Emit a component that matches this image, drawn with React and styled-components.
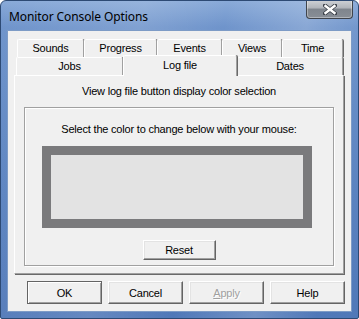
import styled, { createGlobalStyle } from 'styled-components'

const GlobalStyle = createGlobalStyle`
  html, body {
    margin: 0;
    padding: 0;
    background: #ffffff;
  }
  body {
    font-family: "Liberation Sans", Arial, sans-serif;
  }
`

const Window = styled.div`
  width: 359px;
  height: 319px;
  box-sizing: border-box;
  display: flex;
  flex-direction: column;
  border: 1px solid #2d4a74;
  border-radius: 6px 6px 2px 2px;
  background:
    linear-gradient(100deg, rgba(255,255,255,0) 0%, rgba(255,255,255,0.12) 35%, rgba(255,255,255,0) 55%, rgba(255,255,255,0.18) 75%, rgba(255,255,255,0) 90%),
    linear-gradient(180deg, #89aad8 0px, #6f94cb 26px, #5b83c0 60%, #5078b8 100%);
  overflow: hidden;
`

const TitleBar = styled.div`
  height: 29px;
  display: flex;
  align-items: flex-start;
  flex-shrink: 0;
`

const Title = styled.div`
  padding: 7px 0 0 8px;
  font-family: "Noto Sans", "Open Sans", sans-serif;
  font-size: 12px;
  color: #000;
  letter-spacing: -0.1px;
`

const CloseButton = styled.div`
  margin-left: auto;
  margin-right: 5px;
  margin-top: -1px;
  width: 47px;
  height: 19px;
  box-sizing: border-box;
  border: 1px solid #3f444c;
  border-top: none;
  border-radius: 0 0 4px 4px;
  background: linear-gradient(180deg, #d0d3d7 0%, #b0b4ba 45%, #7f858d 50%, #888e96 100%);
  box-shadow: inset 0 0 0 1px rgba(255,255,255,0.35);
  display: flex;
  align-items: center;
  justify-content: center;
`

const Client = styled.div`
  flex: 1;
  margin: 0 6px 6px 6px;
  background: #f0f0f0;
  border: 1px solid #7d9bc6;
  padding: 8px 6px 0 6px;
  display: flex;
  flex-direction: column;
  font-size: 11px;
  letter-spacing: -0.2px;
  color: #000;
`

const TabRow = styled.div`
  display: flex;
  height: 18px;
  padding-left: ${p => p.$indent}px;
`

const Tab = styled.div`
  width: ${p => p.$w}px;
  box-sizing: border-box;
  height: ${p => (p.$selected ? 21 : 18)}px;
  margin-top: ${p => (p.$selected ? -2 : 0)}px;
  border-top: 1px solid #ffffff;
  border-left: 1px solid #ffffff;
  border-right: 1px solid #a0a0a0;
  box-shadow: 1px 0 0 #696969;
  border-radius: 2px 2px 0 0;
  background: #f0f0f0;
  display: flex;
  align-items: flex-start;
  justify-content: center;
  padding-top: ${p => (p.$selected ? 3 : 2)}px;
  position: relative;
  z-index: ${p => (p.$selected ? 2 : 1)};
`

const Panel = styled.div`
  width: 330px;
  height: 199px;
  box-sizing: border-box;
  border-top: 1px solid #ffffff;
  border-left: 1px solid #ffffff;
  border-right: 1px solid #a0a0a0;
  border-bottom: 1px solid #a0a0a0;
  box-shadow: 1px 1px 0 #696969;
  display: flex;
  flex-direction: column;
  align-items: center;
  padding-top: 8px;
`

const Caption = styled.div`
  line-height: 14px;
  text-align: center;
`

const GroupBox = styled.div`
  margin-top: 9px;
  width: 310px;
  height: 159px;
  box-sizing: border-box;
  border: 1px solid #a0a0a0;
  box-shadow: inset 1px 1px 0 #ffffff, 1px 1px 0 #ffffff;
  display: flex;
  flex-direction: column;
  align-items: center;
  padding-top: 14px;
`

const Swatch = styled.div`
  margin-top: 10px;
  margin-right: 4px;
  width: 270px;
  height: 82px;
  box-sizing: border-box;
  border: 9px solid #7a7a7c;
  background: #e3e3e3;
`

const Button = styled.div`
  width: ${p => p.$w || 75}px;
  height: ${p => p.$h || 23}px;
  box-sizing: border-box;
  background: #f0f0f0;
  border-top: 1px solid ${p => (p.$default ? '#646464' : '#ffffff')};
  border-left: 1px solid ${p => (p.$default ? '#646464' : '#ffffff')};
  border-right: 1px solid #646464;
  border-bottom: 1px solid #646464;
  box-shadow: ${p =>
    p.$default
      ? 'inset 1px 1px 0 #ffffff, inset -1px -1px 0 #a0a0a0'
      : 'inset -1px -1px 0 #a0a0a0, inset 1px 1px 0 #e3e3e3'};
  display: flex;
  align-items: center;
  justify-content: center;
  color: ${p => (p.$disabled ? '#a0a0a0' : '#000')};
  text-shadow: ${p => (p.$disabled ? '1px 1px 0 #ffffff' : 'none')};
  font-size: 11px;
`

const ResetButton = styled(Button)`
  margin-top: 12px;
`

const Accel = styled.span`
  text-decoration: underline;
`

const ButtonRow = styled.div`
  display: flex;
  gap: 6px;
  margin-top: 7px;
  padding-left: 13px;
`

const row1 = [
  ['Sounds', 67],
  ['Progress', 73],
  ['Events', 65],
  ['Views', 60],
  ['Time', 61]
]

const row2 = [
  ['Jobs', 107],
  ['Log file', 114, true],
  ['Dates', 106]
]

export default function App() {
  return (
    <>
      <GlobalStyle />
      <Window>
        <TitleBar>
          <Title>Monitor Console Options</Title>
          <CloseButton>
            <svg width="14" height="11" viewBox="0 0 14 11">
              <path d="M2 1.5 L12 9.5 M12 1.5 L2 9.5" stroke="#3a3f47" strokeWidth="4" strokeLinecap="square" />
              <path d="M2.5 2 L11.5 9 M11.5 2 L2.5 9" stroke="#ffffff" strokeWidth="2.4" strokeLinecap="square" />
            </svg>
          </CloseButton>
        </TitleBar>
        <Client>
          <TabRow $indent={3}>
            {row1.map(([label, w]) => (
              <Tab key={label} $w={w}>{label}</Tab>
            ))}
          </TabRow>
          <TabRow $indent={2}>
            {row2.map(([label, w, sel]) => (
              <Tab key={label} $w={w} $selected={sel}>{label}</Tab>
            ))}
          </TabRow>
          <Panel>
            <Caption>View log file button display color selection</Caption>
            <GroupBox>
              <Caption>Select the color to change below with your mouse:</Caption>
              <Swatch />
              <ResetButton $w={73} $h={20}>Reset</ResetButton>
            </GroupBox>
          </Panel>
          <ButtonRow>
            <Button $default>OK</Button>
            <Button>Cancel</Button>
            <Button $disabled><span><Accel>A</Accel>pply</span></Button>
            <Button>Help</Button>
          </ButtonRow>
        </Client>
      </Window>
    </>
  )
}
